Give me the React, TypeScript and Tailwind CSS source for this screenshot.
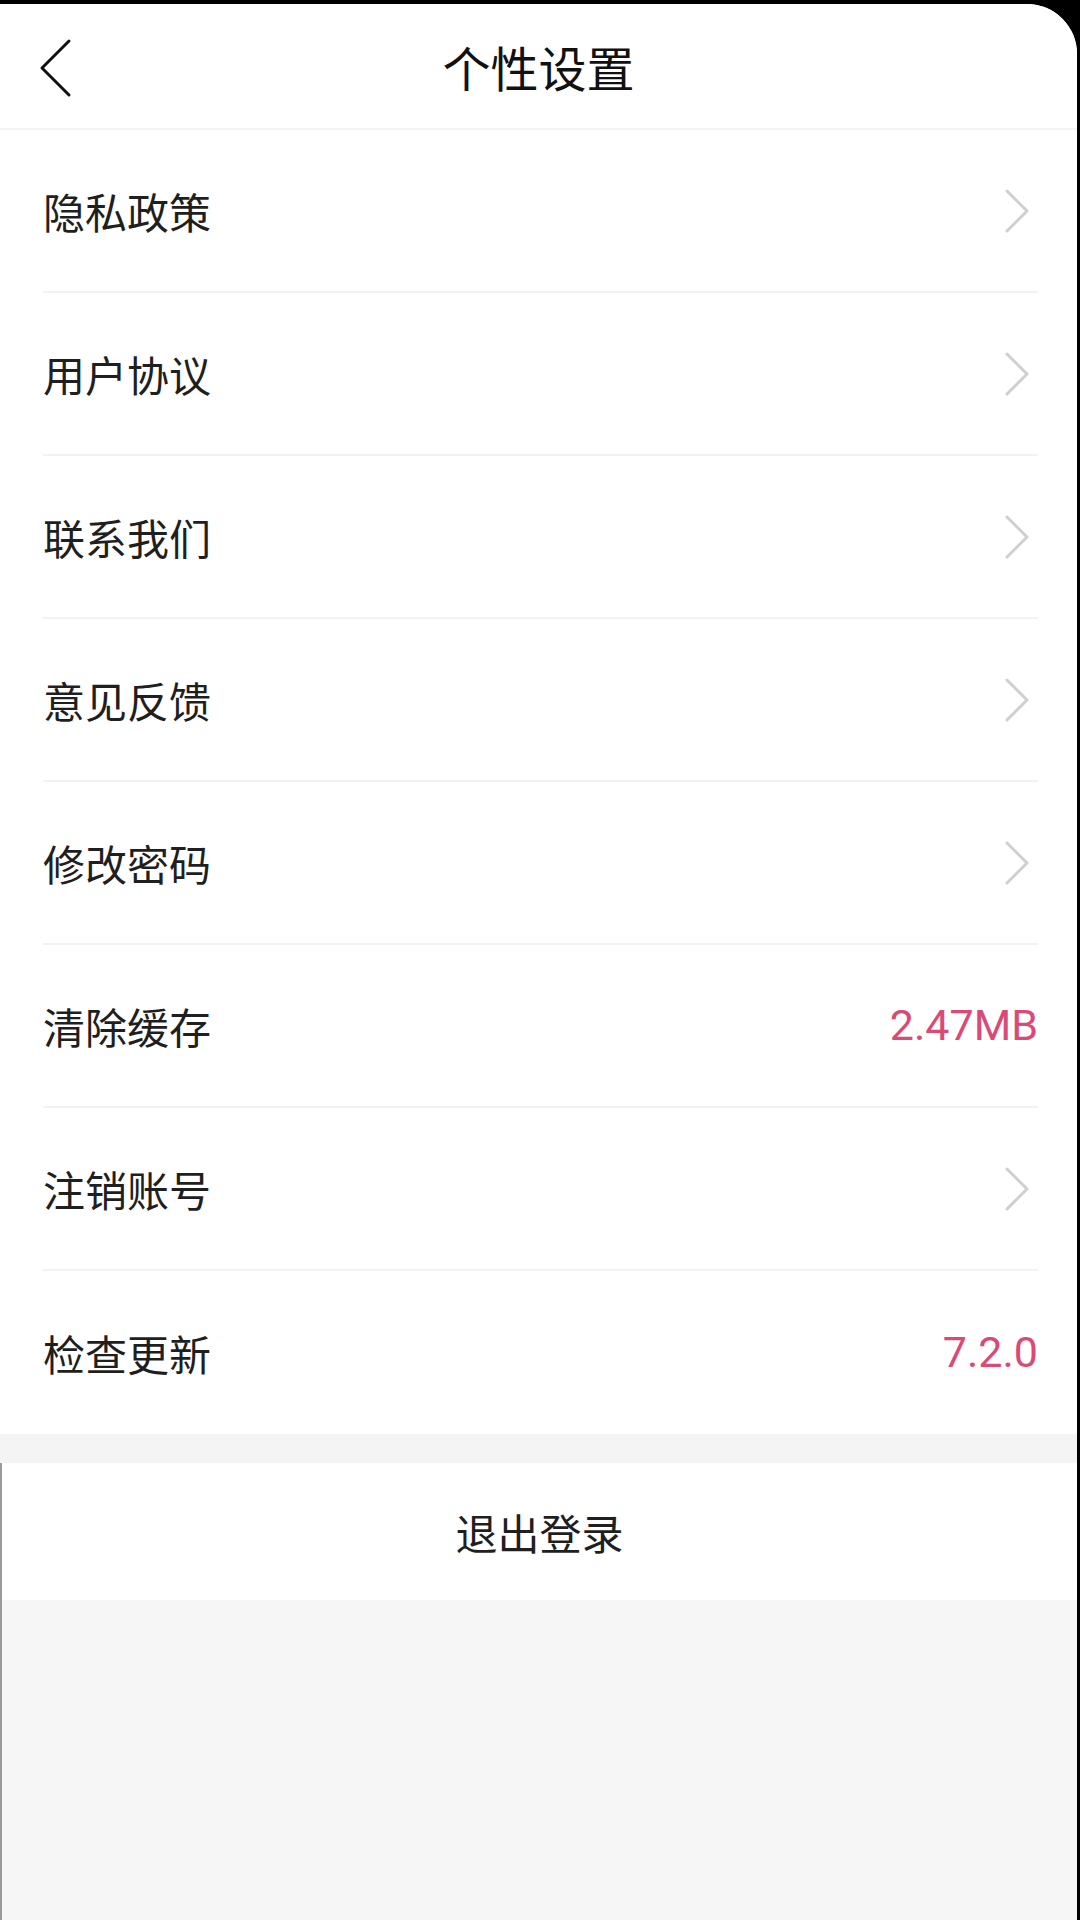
import React from "react";

const rows: { label: string; value?: string }[] = [
  { label: "隐私政策" },
  { label: "用户协议" },
  { label: "联系我们" },
  { label: "意见反馈" },
  { label: "修改密码" },
  { label: "清除缓存", value: "2.47MB" },
  { label: "注销账号" },
  { label: "检查更新", value: "7.2.0" },
];

function ChevronRight() {
  return (
    <svg width="28" height="46" viewBox="0 0 28 46" fill="none" className="mr-[7px]">
      <polyline
        points="4,3 24,23 4,43"
        stroke="#cfcfcf"
        strokeWidth="3"
        strokeLinecap="round"
        strokeLinejoin="round"
      />
    </svg>
  );
}

export default function App() {
  return (
    <div className="w-[1080px] h-[1920px] bg-black pt-[4px] pr-[3px] overflow-hidden">
      <div
        className="h-full w-full bg-[#f6f6f6] rounded-tr-[50px] overflow-hidden flex flex-col"
        style={{ fontFamily: '"Noto Sans CJK SC", "Noto Sans", sans-serif' }}
      >
        {/* Header */}
        <div className="relative h-[126px] shrink-0 bg-white flex items-center justify-center border-b-2 border-[#f3f3f3]">
          <svg
            width="34"
            height="60"
            viewBox="0 0 34 60"
            fill="none"
            className="absolute left-[38px] top-[34px]"
          >
            <polyline
              points="31,3 4,30 31,57"
              stroke="#111111"
              strokeWidth="3"
              strokeLinecap="round"
              strokeLinejoin="round"
            />
          </svg>
          <span className="text-[48px] leading-none text-[#111111]">个性设置</span>
        </div>

        {/* List */}
        <div className="bg-white shrink-0">
          {rows.map((r, i) => (
            <div
              key={r.label}
              className={
                "h-[163px] ml-[43px] mr-[39px] flex items-center justify-between " +
                (i < rows.length - 1 ? "border-b-2 border-[#f2f2f2]" : "")
              }
            >
              <span className="text-[42px] leading-none text-[#1f1f1f]">{r.label}</span>
              {r.value ? (
                <span
                  className="text-[43px] leading-none text-[#d94a78]"
                  style={{ fontFamily: 'Roboto, "Liberation Sans", sans-serif' }}
                >
                  {r.value}
                </span>
              ) : (
                <ChevronRight />
              )}
            </div>
          ))}
        </div>

        <div className="h-[29px] shrink-0 bg-[#f4f4f4]" />

        <div className="flex-1 flex flex-col border-l-2 border-[#9a9a9a]">
          <div className="h-[137px] shrink-0 bg-white flex items-center justify-center">
            <span className="text-[42px] leading-none text-[#1f1f1f]">退出登录</span>
          </div>
          <div className="flex-1 bg-[#f6f6f6]" />
        </div>
      </div>
    </div>
  );
}
